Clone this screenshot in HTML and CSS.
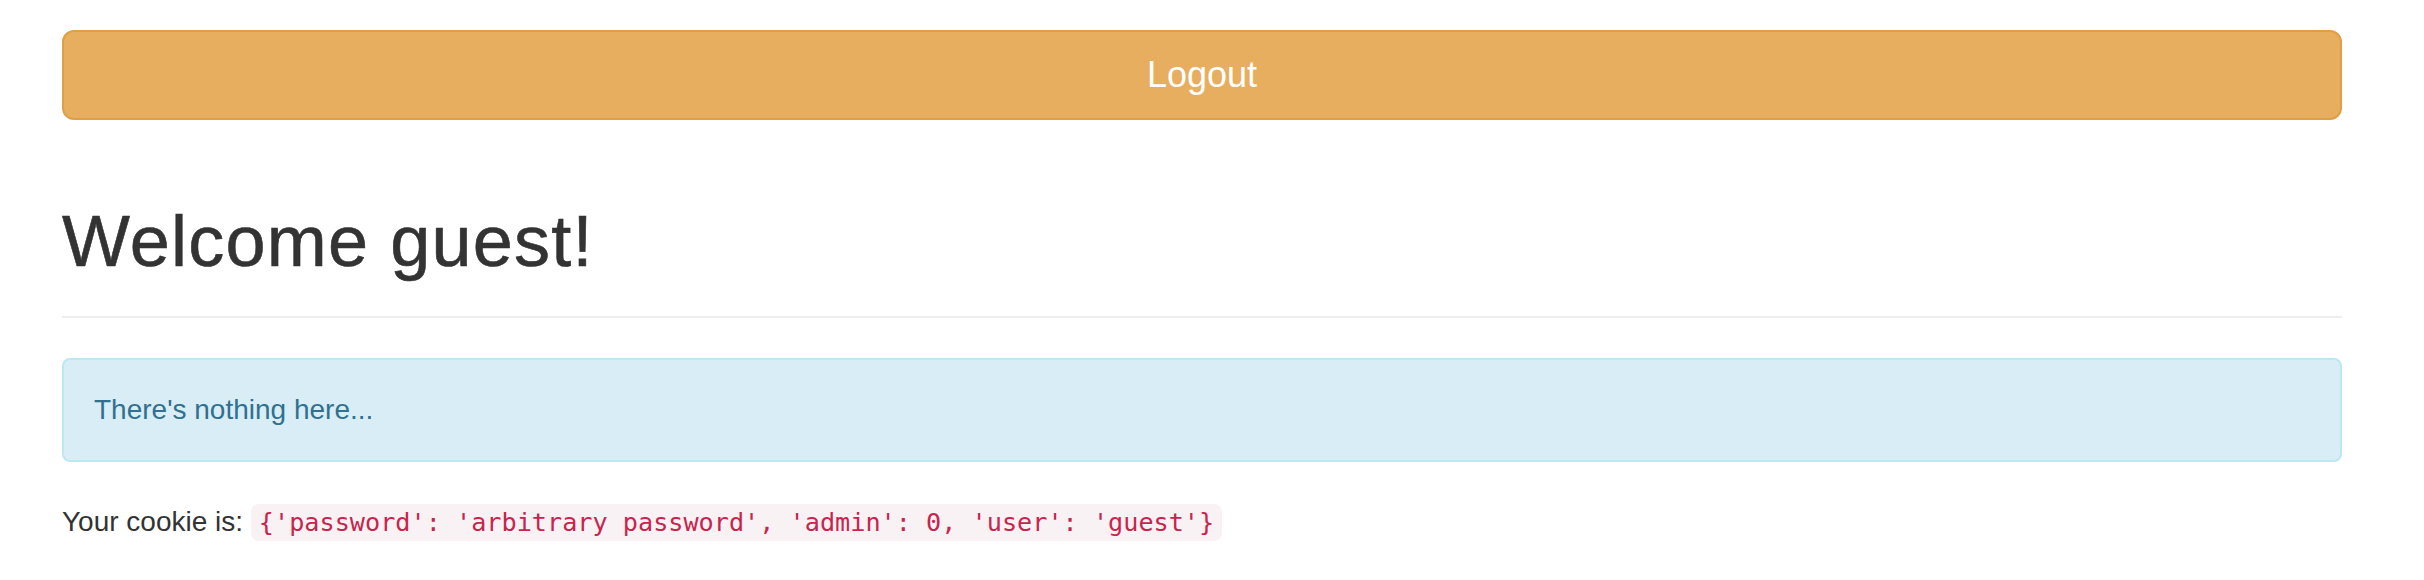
FILE: index.html
```html
<!DOCTYPE html>
<html lang="en">
<head>
<meta charset="utf-8">
<title>Welcome guest!</title>
<link rel="stylesheet" href="styles.css">
</head>
<body>
<div class="container">
  <form class="logout-form">
    <button type="button" class="btn-logout">Logout</button>
  </form>
  <div class="page-header">
    <h1>Welcome guest!</h1>
  </div>
  <div class="alert-info">There's nothing here...</div>
  <p class="cookie">Your cookie is: <code>{'password': 'arbitrary password', 'admin': 0, 'user': 'guest'}</code></p>
</div>
</body>
</html>
```

FILE: styles.css
```css
html, body {
  margin: 0;
  padding: 0;
  background: #fff;
}
body {
  font-family: "Liberation Sans", Arial, Helvetica, sans-serif;
  font-size: 28px;
  line-height: 40px;
  color: #333;
}
.container {
  width: 2280px;
  margin-left: 62px;
  padding-top: 30px;
}
.logout-form {
  margin: 0;
}
.btn-logout {
  display: block;
  width: 100%;
  box-sizing: border-box;
  padding: 19px 32px;
  font-family: "Liberation Sans", Arial, Helvetica, sans-serif;
  font-size: 36px;
  line-height: 48px;
  color: #fff;
  background: #e8ae5f;
  border: 2px solid #e19e45;
  border-radius: 12px;
  text-align: center;
  cursor: pointer;
}
.page-header {
  margin: 82px 0 40px;
  padding-bottom: 35px;
  border-bottom: 2px solid #eee;
}
.page-header h1 {
  margin: 0;
  font-size: 72px;
  line-height: 79px;
  font-weight: 500;
  letter-spacing: 1.2px;
  -webkit-text-stroke: 0.6px #333;
  color: #333;
}
.alert-info {
  padding: 30px;
  margin-bottom: 40px;
  border: 2px solid #bce8f1;
  border-radius: 8px;
  background: #d9edf7;
  color: #31708f;
}
.cookie {
  margin: 0 0 20px;
}
.cookie code {
  font-family: "DejaVu Sans Mono", Menlo, Monaco, monospace;
  font-size: 25.2px;
  padding: 4px 8px;
  color: #c7254e;
  background: #f9f2f4;
  border-radius: 8px;
}
```
